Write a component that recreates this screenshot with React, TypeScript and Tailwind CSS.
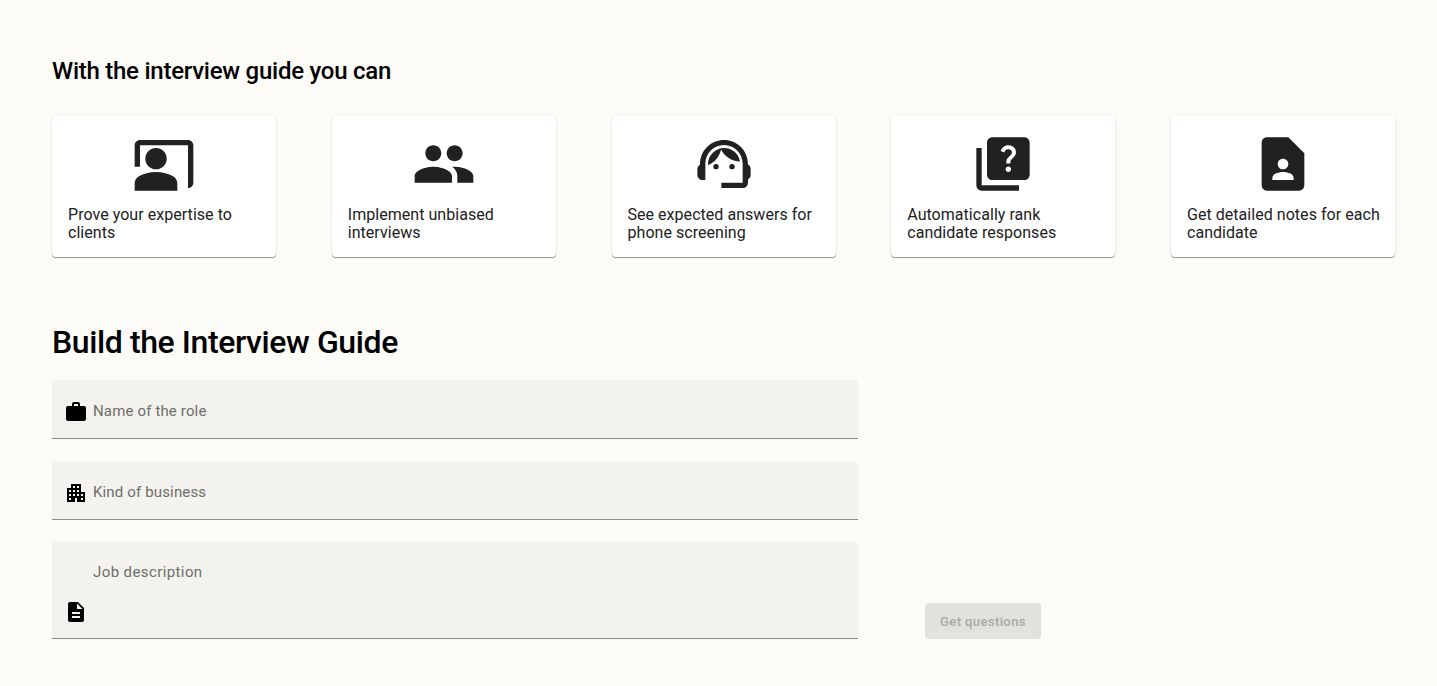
const font = "font-['Roboto',sans-serif]";

const cards = [
  {
    text: "Prove your expertise to clients",
    icon: (
      <>
        <path d="M21 3H3C1.9 3 1 3.9 1 5v8h2V5h18v16c1.1 0 2-.9 2-2V5c0-1.100-.9-2-2-2z" />
        <circle cx="9" cy="10" r="4" />
        <path d="M15.39 16.56C13.71 15.7 11.53 15 9 15c-2.530 0-4.710.7-6.390 1.560C1.610 17.070 1 18.100 1 19.220V22h16v-2.780c0-1.120-.61-2.150-1.610-2.660z" />
      </>
    ),
  },
  {
    text: "Implement unbiased interviews",
    icon: (
      <path d="M16 11c1.660 0 2.990-1.340 2.990-3S17.660 5 16 5c-1.660 0-3 1.340-3 3s1.340 3 3 3zm-8 0c1.660 0 2.990-1.340 2.990-3S9.660 5 8 5C6.340 5 5 6.340 5 8s1.340 3 3 3zm0 2c-2.330 0-7 1.170-7 3.500V19h14v-2.500c0-2.330-4.670-3.500-7-3.500zm8 0c-.29 0-.62.02-.97.05 1.160.84 1.970 1.970 1.970 3.450V19h6v-2.500c0-2.330-4.670-3.500-7-3.500z" />
    ),
  },
  {
    text: "See expected answers for phone screening",
    icon: (
      <>
        <path d="M21 12.220C21 6.730 16.740 3 12 3c-4.690 0-9 3.650-9 9.280-.6.340-1 .98-1 1.720v2c0 1.100.9 2 2 2h1v-6.100c0-3.870 3.130-7 7-7s7 3.130 7 7V19h-8v2h8c1.100 0 2-.9 2-2v-1.220c.59-.31 1-.92 1-1.640v-2.300c0-.7-.41-1.310-1-1.620z" />
        <circle cx="9" cy="13" r="1" />
        <circle cx="15" cy="13" r="1" />
        <path d="M18 11.030C17.520 8.180 15.040 6 12.050 6c-3.030 0-6.290 2.510-6.030 6.450 2.470-1.010 4.330-3.210 4.860-5.890 1.310 2.630 4 4.440 7.120 4.470z" />
      </>
    ),
  },
  {
    text: "Automatically rank candidate responses",
    icon: (
      <>
        <path d="M4 6H2v14c0 1.100.9 2 2 2h14v-2H4V6z" />
        <path d="M20 2H8c-1.100 0-2 .9-2 2v12c0 1.100.9 2 2 2h12c1.100 0 2-.9 2-2V4c0-1.100-.9-2-2-2zm-5.990 13c-.59 0-1.050-.47-1.050-1.050 0-.59.47-1.040 1.050-1.040.59 0 1.040.45 1.040 1.040-.01.58-.45 1.050-1.040 1.050zm2.500-6.170c-.63.92-1.230 1.210-1.560 1.810-.13.24-.18.4-.18 1.180h-1.520c0-.41-.06-1.080.26-1.650.41-.73 1.180-1.160 1.630-1.800.48-.68.21-1.940-1.140-1.940-.88 0-1.320.67-1.500 1.230l-1.370-.57C11.510 5.960 12.520 5 13.990 5c1.230 0 2.080.56 2.510 1.260.37.61.58 1.730.01 2.570z" />
      </>
    ),
  },
  {
    text: "Get detailed notes for each candidate",
    icon: (
      <path d="M14 2H6c-1.100 0-2 .9-2 2v16c0 1.100.9 2 2 2h12c1.100 0 2-.9 2-2V8l-6-6zm-2 8c1.100 0 2 .9 2 2s-.9 2-2 2-2-.9-2-2 .9-2 2-2zm4 8H8v-.57c0-.81.48-1.530 1.220-1.850.85-.37 1.790-.58 2.780-.58.99 0 1.930.21 2.780.58.74.32 1.220 1.040 1.220 1.850V18z" />
    ),
  },
];

function FieldIcon({ d }: { d: string }) {
  return (
    <svg viewBox="0 0 24 24" className="w-6 h-6 mt-[2px] shrink-0 fill-black">
      <path d={d} />
    </svg>
  );
}

function Card({ text, icon }: { text: string; icon: React.ReactNode }) {
  return (
    <div className="w-[224px] h-[141px] bg-white rounded-[4px] shadow-[0_1px_1px_rgba(0,0,0,0.4),0_0_3px_rgba(0,0,0,0.06)] pl-4 pr-3 pt-4">
      <svg viewBox="0 0 24 24" className="w-16 h-16 ml-16 fill-[#212121]">
        {icon}
      </svg>
      <p className="mt-[10px] text-[16px] leading-[18px] text-[#212121] tracking-[0.04px]">{text}</p>
    </div>
  );
}

export default function App() {
  return (
    <div className={`${font} min-h-[686px] bg-[#fcfbf7] pl-[52px] pr-[42px] pt-[55px]`}>
      <h2 className="text-[24px] leading-[32px] font-medium tracking-[-0.25px] text-black">With the interview guide you can</h2>
      <div className="mt-[29px] flex justify-between">
        {cards.map((c) => (
          <Card key={c.text} text={c.text} icon={c.icon} />
        ))}
      </div>
      <h1 className="mt-[64px] text-[32px] leading-[42px] font-medium tracking-[-0.4px] text-black">Build the Interview Guide</h1>
      <div className="mt-[17px] flex items-end gap-[67px]">
        <div className="w-[806px] flex flex-col gap-[22px]">
          <label className="h-[59px] flex items-center gap-[5px] pl-3 pt-1 bg-[#f3f2ee] rounded-t-[4px] border-b border-[#8f8d88]">
            <FieldIcon d="M20 6h-4V4c0-1.110-.89-2-2-2h-4c-1.110 0-2 .89-2 2v2H4c-1.110 0-1.990.89-1.990 2L2 19c0 1.110.89 2 2 2h16c1.110 0 2-.89 2-2V8c0-1.110-.89-2-2-2zm-6 0h-4V4h4v2z" />
            <input
              placeholder="Name of the role"
              className="flex-1 bg-transparent outline-none text-[15px] tracking-[0.15px] placeholder:text-[#6f6e6a]"
            />
          </label>
          <label className="h-[59px] flex items-center gap-[5px] pl-3 pt-1 bg-[#f3f2ee] rounded-t-[4px] border-b border-[#8f8d88]">
            <FieldIcon d="M17 11V3H7v4H3v14h8v-4h2v4h8V11h-4zM7 19H5v-2h2v2zm0-4H5v-2h2v2zm0-4H5V9h2v2zm4 4H9v-2h2v2zm0-4H9V9h2v2zm0-4H9V5h2v2zm4 8h-2v-2h2v2zm0-4h-2V9h2v2zm0-4h-2V5h2v2zm4 12h-2v-2h2v2zm0-4h-2v-2h2v2z" />
            <input
              placeholder="Kind of business"
              className="flex-1 bg-transparent outline-none text-[15px] tracking-[0.15px] placeholder:text-[#6f6e6a]"
            />
          </label>
          <label className="h-[98px] -mt-px flex items-end gap-[5px] pl-3 pb-[14px] bg-[#f3f2ee] rounded-t-[4px] border-b border-[#8f8d88]">
            <FieldIcon d="M14 2H6c-1.100 0-1.990.9-1.990 2L4 20c0 1.100.89 2 1.990 2H18c1.100 0 2-.9 2-2V8l-6-6zm2 16H8v-2h8v2zm0-4H8v-2h8v2zm-3-5V3.500L18.500 9H13z" />
            <textarea
              placeholder="Job description"
              className="flex-1 h-[63px] mb-[-1px] resize-none bg-transparent outline-none text-[15px] leading-[20px] tracking-[0.4px] placeholder:text-[#6f6e6a]"
            />
          </label>
        </div>
        <button
          disabled
          className="w-[116px] h-[36px] pt-px rounded-[4px] bg-[#e2e1dd] text-[13px] font-medium tracking-[0.4px] text-[#a9a8a4]"
        >
          Get questions
        </button>
      </div>
    </div>
  );
}
